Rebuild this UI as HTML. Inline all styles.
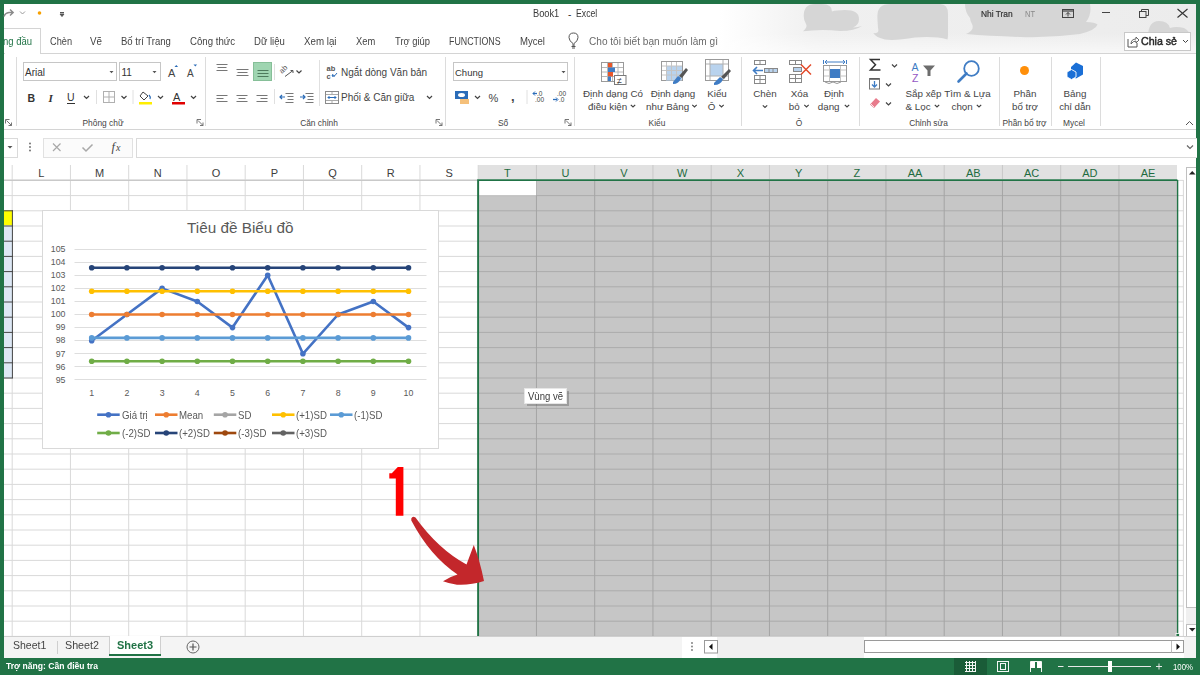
<!DOCTYPE html><html><head><meta charset="utf-8"><style>
*{margin:0;padding:0;box-sizing:border-box}
html,body{width:1200px;height:675px;overflow:hidden;background:#217346}
body{position:relative;font-family:"Liberation Sans",sans-serif}
.t{position:absolute;white-space:nowrap;line-height:1}
.b{position:absolute}
svg{position:absolute;overflow:visible}
</style></head><body>
<div class="b" style="left:4px;top:4px;width:1192px;height:654px;background:#fff"></div>
<svg style="left:0;top:0" width="1200" height="60" viewBox="0 0 1200 60">
<defs><linearGradient id="tg" x1="0" x2="1" y1="0" y2="0">
<stop offset="0" stop-color="#fff"/><stop offset="0.6" stop-color="#fff"/><stop offset="0.68" stop-color="#f0f0f0"/><stop offset="1" stop-color="#ececec"/></linearGradient>
<linearGradient id="tv" x1="0" x2="0" y1="0" y2="1">
<stop offset="0" stop-color="#fff" stop-opacity="0"/><stop offset="0.6" stop-color="#fff" stop-opacity="0"/><stop offset="1" stop-color="#fff" stop-opacity="0.6"/></linearGradient>
</defs>
<rect x="4" y="4" width="1192" height="49" fill="url(#tg)"/>
<rect x="4" y="4" width="1192" height="49" fill="url(#tv)"/>
<clipPath id="tc"><rect x="4" y="4" width="1192" height="49"/></clipPath>
<g fill="#d6d6d6" clip-path="url(#tc)">
<path d="M803.7,16 Q803.7,4 815,4 L822,4 Q832,4 832,11.5 Q836,10 845,10 Q859,10 859,19 Q859,25 853,27.5 Q858,27 862,26 Q855,31 840,31 Q825,29.5 812,30.5 Q806,31 803,31.3 Q808,27 806,24 Q803.7,20 803.7,16Z"/>
<path d="M890,4 H940 Q948,4 948,14 V34 Q948,37 947.5,39.4 Q935,36 915,37.5 Q895,41 885,39.5 Q876,37.5 873.3,33 Q880,34 878,28 Q877.4,20 877.4,16 Q877.4,4 890,4Z"/>
<path d="M965,4 H1090 Q1092,14 1086,22 Q1095,22 1097.5,24.5 Q1096,30 1080,34 Q1050,38 1020,37 Q990,36 966,34 Q975,30 972,24 Q970,20 970,18 Q965,12 965,4Z"/>
<path d="M1148,37 Q1148,21 1159,21 Q1168,21 1170,28 Q1176,26 1184,28 Q1190,31 1190,37Z"/>
</g>
</svg>
<svg style="left:0;top:0" width="80" height="28">
<path d="M4,16.5 Q5,13 9,12.5 H13 M10,9.5 L13.2,12.5 L10,15.5" stroke="#8a8a8a" stroke-width="1.4" fill="none"/>
<path d="M20,11.5 L22.5,14 L25,11.5" stroke="#9a9a9a" stroke-width="1" fill="none"/>
<circle cx="39.5" cy="13" r="1.8" fill="#f7a000"/>
<path d="M60,12.5 L64,12.5 M60,14 L64,14 L62,16.5Z" stroke="#555" stroke-width="1" fill="#555"/>
</svg>
<div class="t" style="left:533.3px;top:9.2px;font-size:10.2px;color:#3a3a3a;font-weight:400;transform:scaleX(0.909);transform-origin:0 0;">Book1</div>
<div class="t" style="left:568.0px;top:9.5px;font-size:10px;color:#333;font-weight:400;">-</div>
<div class="t" style="left:575.7px;top:9.2px;font-size:10.2px;color:#3a3a3a;font-weight:400;transform:scaleX(0.854);transform-origin:0 0;">Excel</div>
<div class="t" style="left:980.7px;top:10.0px;font-size:8.5px;color:#333;font-weight:400;transform:scaleX(0.984);transform-origin:0 0;-webkit-text-stroke:0.2px #333">Nhi Tran</div>
<div class="t" style="left:1025.0px;top:10.0px;font-size:8.5px;color:#888;font-weight:400;transform:scaleX(0.883);transform-origin:0 0;">NT</div>
<svg style="left:0;top:0" width="1200" height="28">
<rect x="1062.5" y="9.5" width="11" height="8" fill="none" stroke="#444" stroke-width="1"/>
<path d="M1063,11 L1073,11" stroke="#444" stroke-width="1.2"/>
<path d="M1068,16.5 L1068,12.5 M1066,14.5 L1068,12.5 L1070,14.5" stroke="#444" stroke-width="1" fill="none"/>
<path d="M1102,12.5 L1110,12.5" stroke="#444" stroke-width="1"/>
<rect x="1139.5" y="11.5" width="6.5" height="6" fill="none" stroke="#444" stroke-width="1"/>
<path d="M1141.5,11.5 L1141.5,9.5 L1148.5,9.5 L1148.5,15.5 L1146,15.5" stroke="#444" stroke-width="1" fill="none"/>
<path d="M1177.5,9 L1187.5,17.5 M1187.5,9 L1177.5,17.5" stroke="#333" stroke-width="1.1"/>
</svg>
<div class="b" style="left:4px;top:28px;width:37px;height:26px;background:#fff;border-top:1px solid #d4d4d4;border-right:1px solid #d4d4d4"></div>
<div class="b" style="left:4px;top:53px;width:1192px;height:1px;background:#d4d4d4"></div>
<div class="b" style="left:41px;top:53px;width:0px;height:0px;"></div>
<div class="t" style="left:3.0px;top:35.9px;font-size:11px;color:#217346;font-weight:400;transform:scaleX(0.862);transform-origin:0 0;">ng đầu</div>
<div class="t" style="left:50.0px;top:35.9px;font-size:11px;color:#444;font-weight:400;transform:scaleX(0.837);transform-origin:0 0;">Chèn</div>
<div class="t" style="left:90.0px;top:35.9px;font-size:11px;color:#444;font-weight:400;transform:scaleX(0.892);transform-origin:0 0;">Vẽ</div>
<div class="t" style="left:121.0px;top:35.9px;font-size:11px;color:#444;font-weight:400;transform:scaleX(0.867);transform-origin:0 0;">Bố trí Trang</div>
<div class="t" style="left:190.0px;top:35.9px;font-size:11px;color:#444;font-weight:400;transform:scaleX(0.876);transform-origin:0 0;">Công thức</div>
<div class="t" style="left:254.2px;top:35.9px;font-size:11px;color:#444;font-weight:400;transform:scaleX(0.868);transform-origin:0 0;">Dữ liệu</div>
<div class="t" style="left:304.2px;top:35.9px;font-size:11px;color:#444;font-weight:400;transform:scaleX(0.886);transform-origin:0 0;">Xem lại</div>
<div class="t" style="left:355.8px;top:35.9px;font-size:11px;color:#444;font-weight:400;transform:scaleX(0.849);transform-origin:0 0;">Xem</div>
<div class="t" style="left:395.0px;top:35.9px;font-size:11px;color:#444;font-weight:400;transform:scaleX(0.853);transform-origin:0 0;">Trợ giúp</div>
<div class="t" style="left:449.2px;top:35.9px;font-size:11px;color:#444;font-weight:400;transform:scaleX(0.804);transform-origin:0 0;">FUNCTIONS</div>
<div class="t" style="left:520.0px;top:35.9px;font-size:11px;color:#444;font-weight:400;transform:scaleX(0.870);transform-origin:0 0;">Mycel</div>
<div class="b" style="left:5px;top:53px;width:35px;height:1px;background:#fff"></div>
<svg style="left:0;top:0" width="600" height="60">
<path d="M573,46 L573,43.5 Q569,41 569,37.5 Q569,33 573.5,33 Q578,33 578,37.5 Q578,41 574,43.5 L574,46" stroke="#555" stroke-width="1" fill="none"/>
<path d="M571.5,46.5 L575.5,46.5 M572,48 L575,48" stroke="#555" stroke-width="1"/>
</svg>
<div class="t" style="left:589.0px;top:35.9px;font-size:11px;color:#6a6a6a;font-weight:400;transform:scaleX(0.917);transform-origin:0 0;">Cho tôi biết bạn muốn làm gì</div>
<div class="b" style="left:1123.5px;top:31.5px;width:67px;height:19px;border:1px solid #c8c8c8;background:#fff"></div>
<svg style="left:0;top:0" width="1200" height="60">
<path d="M1128,39 L1128,47 L1137,47 L1137,43" stroke="#555" stroke-width="1" fill="none"/>
<path d="M1131,44 Q1131,39 1136,39 L1136,37 L1139,40 L1136,43 L1136,41 Q1133,41 1131,44Z" stroke="#555" stroke-width="0.9" fill="none"/>
<path d="M1183,40 L1185.5,42.5 L1188,40" stroke="#444" stroke-width="1" fill="none"/>
</svg>
<div class="t" style="left:1140.7px;top:35.5px;font-size:10.6px;color:#2a2a2a;font-weight:400;transform:scaleX(1.002);transform-origin:0 0;-webkit-text-stroke:0.45px #2a2a2a">Chia sẻ</div>
<div class="b" style="left:4px;top:129px;width:1192px;height:1px;background:#d4d4d4"></div>
<div class="b" style="left:16px;top:57px;width:1px;height:69px;background:#dcdcdc"></div>
<div class="b" style="left:205px;top:57px;width:1px;height:69px;background:#dcdcdc"></div>
<div class="b" style="left:445px;top:57px;width:1px;height:69px;background:#dcdcdc"></div>
<div class="b" style="left:574px;top:57px;width:1px;height:69px;background:#dcdcdc"></div>
<div class="b" style="left:741px;top:57px;width:1px;height:69px;background:#dcdcdc"></div>
<div class="b" style="left:859px;top:57px;width:1px;height:69px;background:#dcdcdc"></div>
<div class="b" style="left:999px;top:57px;width:1px;height:69px;background:#dcdcdc"></div>
<div class="b" style="left:1050.5px;top:57px;width:1px;height:69px;background:#dcdcdc"></div>
<div class="b" style="left:1099.5px;top:57px;width:1px;height:69px;background:#dcdcdc"></div>
<div class="t" style="left:-197.0px;width:600px;text-align:center;top:119.1px;font-size:8.4px;color:#444;font-weight:400;">Phông chữ</div>
<div class="t" style="left:19.0px;width:600px;text-align:center;top:119.1px;font-size:8.4px;color:#444;font-weight:400;">Căn chỉnh</div>
<div class="t" style="left:203.0px;width:600px;text-align:center;top:119.1px;font-size:8.4px;color:#444;font-weight:400;">Số</div>
<div class="t" style="left:357.0px;width:600px;text-align:center;top:119.1px;font-size:8.4px;color:#444;font-weight:400;">Kiểu</div>
<div class="t" style="left:499.0px;width:600px;text-align:center;top:119.1px;font-size:8.4px;color:#444;font-weight:400;">Ô</div>
<div class="t" style="left:628.5px;width:600px;text-align:center;top:119.1px;font-size:8.4px;color:#444;font-weight:400;">Chỉnh sửa</div>
<div class="t" style="left:724.5px;width:600px;text-align:center;top:119.1px;font-size:8.4px;color:#444;font-weight:400;">Phần bổ trợ</div>
<div class="t" style="left:774.0px;width:600px;text-align:center;top:119.1px;font-size:8.4px;color:#444;font-weight:400;">Mycel</div>
<div class="b" style="left:23px;top:62px;width:94px;height:19px;border:1px solid #c6c6c6;background:#fff"></div>
<div class="b" style="left:119px;top:62px;width:41.5px;height:19px;border:1px solid #c6c6c6;background:#fff"></div>
<div class="b" style="left:453px;top:62px;width:115px;height:19px;border:1px solid #c6c6c6;background:#fff"></div>
<div class="t" style="left:25.0px;top:67.5px;font-size:10px;color:#333;font-weight:400;">Arial</div>
<div class="t" style="left:121.5px;top:67.5px;font-size:10px;color:#333;font-weight:400;">11</div>
<div class="t" style="left:455.0px;top:68.0px;font-size:9.5px;color:#333;font-weight:400;">Chung</div>
<div class="b" style="left:253px;top:62px;width:19px;height:19px;background:#9fd5b1;border:1px solid #86bf98"></div>

<svg style="left:0;top:0" width="1200" height="135">
<g fill="#555">
<path d="M109.5,71 l4,0 l-2,2.2z M152.5,71 l4,0 l-2,2.2z M561.5,71 l4,0 l-2,2.2z"/>
</g>
<text x="168" y="77" font-family="Liberation Sans" font-size="11" fill="#444">A</text>
<text x="187" y="77" font-family="Liberation Sans" font-size="10" fill="#444">A</text>
<path d="M174.5,67 l1.8,-2 l1.8,2z" fill="#2b6cb8"/>
<path d="M193.5,64.5 l1.8,2 l1.8,-2z" fill="#2b6cb8"/>
<text x="27.5" y="102" font-family="Liberation Sans" font-size="10.5" font-weight="700" fill="#333">B</text>
<text x="48.5" y="101.5" font-family="Liberation Serif" font-size="11" font-style="italic" font-weight="700" fill="#333">I</text>
<text x="67" y="101" font-family="Liberation Sans" font-size="10.5" fill="#333">U</text>
<path d="M67,103.5 h8" stroke="#333" stroke-width="1"/>
<g stroke="#555" stroke-width="1" fill="none">
<path d="M84,96 l2.5,2.5 l2.5,-2.5 M121.5,96 l2.5,2.5 l2.5,-2.5 M158,96 l2.5,2.5 l2.5,-2.5 M191,96 l2.5,2.5 l2.5,-2.5" stroke-width="1.2" stroke="#444"/>
<path d="M296.5,70.5 l2.5,2.5 l2.5,-2.5 M427,96 l2.5,2.5 l2.5,-2.5 M475,96 l2.5,2.5 l2.5,-2.5" stroke-width="1.2" stroke="#444"/>
</g>
<path d="M96.5,90 v14 M133,90 v14 M274.5,64 v16 M274.5,89 v15 M319.5,60 v46 M527,90 v14" stroke="#e0e0e0" stroke-width="1"/>
<g stroke="#b0b0b0" stroke-width="1" fill="none"><rect x="103.5" y="91.5" width="11" height="11"/><path d="M109,92 v10 M104,97 h10"/></g>
<path d="M143,92 l5,4 l-4,4 l-4,-4z" stroke="#444" stroke-width="1" fill="#fff"/>
<path d="M149,95 q2,2 1,4" stroke="#2b6cb8" stroke-width="1.2" fill="none"/>
<rect x="139" y="102" width="13" height="2.5" fill="#ffee00"/>
<text x="173" y="101" font-family="Liberation Sans" font-size="11" fill="#333">A</text>
<rect x="172" y="102" width="13" height="2.5" fill="#e00000"/>
<g stroke="#777" stroke-width="1">
<path d="M216.5,64.5 h11 M217.5,67.5 h9 M216.5,70.5 h11"/>
<path d="M236.5,69.5 h12 M237.5,72.5 h10 M236.5,75.5 h12"/>
<path d="M257.5,70.5 h11 M257.5,73.5 h11 M257.5,76.5 h11" stroke="#4d7a5c"/>
<path d="M216.5,95.5 h11 M216.5,98.5 h7 M216.5,101.5 h11"/>
<path d="M236.5,95.5 h11 M238.5,98.5 h7 M236.5,101.5 h11"/>
<path d="M256.5,95.5 h11 M260.5,98.5 h7 M256.5,101.5 h11"/>
<path d="M285.5,93.5 h8 M287.5,96.5 h6 M287.5,99.5 h6 M285.5,102.5 h8"/>
<path d="M305.5,93.5 h8 M307.5,96.5 h6 M307.5,99.5 h6 M305.5,102.5 h8"/>
</g>
<path d="M280,97 h5 M282,95 l-2,2 l2,2" stroke="#2b6cb8" stroke-width="1.2" fill="none"/>
<path d="M300,97 h5 M303,95 l2,2 l-2,2" stroke="#2b6cb8" stroke-width="1.2" fill="none"/>
<text x="0" y="0" font-family="Liberation Sans" font-size="7.5" fill="#555" transform="translate(282,74) rotate(-45)">ab</text>
<path d="M285,76.5 l8,-6 M290.5,70.5 h2.5 v2.5" stroke="#555" stroke-width="1" fill="none"/>
<text x="326.5" y="71" font-family="Liberation Sans" font-size="7.5" font-weight="700" fill="#555">ab</text>
<text x="326.5" y="78.5" font-family="Liberation Sans" font-size="7.5" font-weight="700" fill="#555">c</text>
<path d="M332,76 q3,1 5,-3 M335,76 l-3,0 l1,-2" stroke="#2b6cb8" stroke-width="1" fill="none"/>
<rect x="325.5" y="91.5" width="13" height="12" stroke="#8a8a8a" fill="#fff" stroke-width="1"/>
<path d="M326,94.5 h12 M326,100.5 h12 M332,92 v2 M332,101 v2" stroke="#aaa"/>
<path d="M328,97.5 h8 M329.5,96 l-1.5,1.5 l1.5,1.5 M334.5,96 l1.5,1.5 l-1.5,1.5" stroke="#2b6cb8" stroke-width="1" fill="none"/>
<rect x="455" y="91" width="13" height="8" fill="#2b6cb8"/>
<ellipse cx="461.5" cy="95" rx="3.5" ry="2" fill="#fff"/>
<rect x="460" y="99" width="9" height="5" fill="#f5c07a"/>
<text x="488.5" y="102" font-family="Liberation Sans" font-size="11" fill="#444">%</text>
<text x="511" y="101" font-family="Liberation Sans" font-size="13" font-weight="700" fill="#444">,</text>
<text x="537" y="96" font-family="Liberation Sans" font-size="6.5" fill="#444">.0</text>
<text x="535" y="102" font-family="Liberation Sans" font-size="6.5" fill="#444">.00</text>
<path d="M533,93.5 h4" stroke="#2b6cb8" stroke-width="1.3"/><path d="M535,91.5 l-2,2 l2,2" stroke="#2b6cb8" fill="none"/>
<text x="557" y="96" font-family="Liberation Sans" font-size="6.5" fill="#444">.00</text>
<text x="559" y="102" font-family="Liberation Sans" font-size="6.5" fill="#444">.0</text>
<path d="M553,99.5 h4" stroke="#2b6cb8" stroke-width="1.3"/><path d="M556,97.5 l2,2 l-2,2" stroke="#2b6cb8" fill="none"/>
<!-- dialog launchers -->
<g stroke="#666" stroke-width="0.9" fill="none">
<path d="M9.5,119.5 h-4 v4 M6.5,120.5 l5,5 M11.5,122.5 v3 h-3"/>
<path d="M201.0,119.5 h-4 v4 M198.0,120.5 l5,5 M203.0,122.5 v3 h-3"/>
<path d="M440.0,119.5 h-4 v4 M437.0,120.5 l5,5 M442.0,122.5 v3 h-3"/>
<path d="M569.0,119.5 h-4 v4 M566.0,120.5 l5,5 M571.0,122.5 v3 h-3"/>
</g>
<path d="M1186,125 l3.5,-3.5 l3.5,3.5" stroke="#555" stroke-width="1" fill="none"/>
</svg>
<div class="t" style="left:341.0px;top:67.5px;font-size:10px;color:#444;font-weight:400;">Ngắt dòng Văn bản</div>
<div class="t" style="left:341.0px;top:92.5px;font-size:10px;color:#444;font-weight:400;">Phối &amp; Căn giữa</div>
<div class="t" style="left:313.0px;width:600px;text-align:center;top:88.7px;font-size:9.8px;color:#444;font-weight:400;">Định dạng Có</div>
<div class="t" style="left:313.0px;width:600px;text-align:center;top:102.0px;font-size:9.8px;color:#444;font-weight:400;">điều kiện <span style="display:inline-block;width:8px"></span></div>
<div class="t" style="left:373.0px;width:600px;text-align:center;top:88.7px;font-size:9.8px;color:#444;font-weight:400;">Định dạng</div>
<div class="t" style="left:373.0px;width:600px;text-align:center;top:102.0px;font-size:9.8px;color:#444;font-weight:400;">như Bảng <span style="display:inline-block;width:8px"></span></div>
<div class="t" style="left:417.0px;width:600px;text-align:center;top:88.7px;font-size:9.8px;color:#444;font-weight:400;">Kiểu</div>
<div class="t" style="left:417.0px;width:600px;text-align:center;top:102.0px;font-size:9.8px;color:#444;font-weight:400;">Ô <span style="display:inline-block;width:8px"></span></div>
<div class="t" style="left:465.0px;width:600px;text-align:center;top:88.7px;font-size:9.8px;color:#444;font-weight:400;">Chèn</div>
<div class="t" style="left:465.0px;width:600px;text-align:center;top:102.0px;font-size:9.8px;color:#444;font-weight:400;"><span style="display:inline-block;width:8px"></span></div>
<div class="t" style="left:499.5px;width:600px;text-align:center;top:88.7px;font-size:9.8px;color:#444;font-weight:400;">Xóa</div>
<div class="t" style="left:499.5px;width:600px;text-align:center;top:102.0px;font-size:9.8px;color:#444;font-weight:400;">bỏ <span style="display:inline-block;width:8px"></span></div>
<div class="t" style="left:534.0px;width:600px;text-align:center;top:88.7px;font-size:9.8px;color:#444;font-weight:400;">Định</div>
<div class="t" style="left:534.0px;width:600px;text-align:center;top:102.0px;font-size:9.8px;color:#444;font-weight:400;">dạng <span style="display:inline-block;width:8px"></span></div>
<div class="t" style="left:623.5px;width:600px;text-align:center;top:88.7px;font-size:9.8px;color:#444;font-weight:400;">Sắp xếp</div>
<div class="t" style="left:623.5px;width:600px;text-align:center;top:102.0px;font-size:9.8px;color:#444;font-weight:400;">&amp; Lọc <span style="display:inline-block;width:8px"></span></div>
<div class="t" style="left:667.5px;width:600px;text-align:center;top:88.7px;font-size:9.8px;color:#444;font-weight:400;">Tìm &amp; Lựa</div>
<div class="t" style="left:667.5px;width:600px;text-align:center;top:102.0px;font-size:9.8px;color:#444;font-weight:400;">chọn <span style="display:inline-block;width:8px"></span></div>
<div class="t" style="left:725.0px;width:600px;text-align:center;top:88.7px;font-size:9.8px;color:#444;font-weight:400;">Phần</div>
<div class="t" style="left:725.0px;width:600px;text-align:center;top:102.0px;font-size:9.8px;color:#444;font-weight:400;">bổ trợ</div>
<div class="t" style="left:775.0px;width:600px;text-align:center;top:88.7px;font-size:9.8px;color:#444;font-weight:400;">Bảng</div>
<div class="t" style="left:775.0px;width:600px;text-align:center;top:102.0px;font-size:9.8px;color:#444;font-weight:400;">chỉ dẫn</div>
<div class="b" style="left:4px;top:137.5px;width:14px;height:20px;border:1px solid #dadada;border-left:none;background:#fff"></div>
<div class="b" style="left:42.5px;top:137.5px;width:90.5px;height:20px;border:1px solid #e1e1e1;background:#fbfbfb"></div>
<div class="b" style="left:135.5px;top:137.5px;width:1061px;height:20px;border-top:1px solid #dadada;border-bottom:1px solid #dadada;border-left:1px solid #dadada;background:#fff"></div>
<svg style="left:0;top:0" width="1200" height="165">
<path d="M7.5,146 h5 l-2.5,2.5z" fill="#555"/>
<circle cx="30" cy="143.5" r="0.9" fill="#666"/><circle cx="30" cy="147" r="0.9" fill="#666"/><circle cx="30" cy="150.5" r="0.9" fill="#666"/>
<path d="M53,143.5 l7.5,7.5 M60.5,143.5 l-7.5,7.5" stroke="#a8a8a8" stroke-width="1.2"/>
<path d="M82.5,147.5 l3.5,3.5 l6.5,-6.5" stroke="#a8a8a8" stroke-width="1.5" fill="none"/>
<path d="M1187,145.5 l3,3 l3,-3" stroke="#666" stroke-width="1.2" fill="none"/>
</svg>
<div class="t" style="left:111.5px;top:140.9px;font-size:12.5px;color:#444;font-weight:400;font-family:Liberation Serif;font-style:italic">f</div>
<div class="t" style="left:116.0px;top:143.0px;font-size:10px;color:#444;font-weight:400;font-family:Liberation Serif;font-style:italic">x</div>
<div class="b" style="left:478.2px;top:165.2px;width:699.2px;height:13.6px;background:#e1e1e1"></div>
<svg style="left:0;top:0" width="1200" height="675">
<path d="M4,180.40 H478" stroke="#d9d9d9" stroke-width="1"/>
<path d="M1177,180.40 H1183.5" stroke="#d9d9d9" stroke-width="1"/>
<path d="M4,195.60 H478" stroke="#d9d9d9" stroke-width="1"/>
<path d="M1177,195.60 H1183.5" stroke="#d9d9d9" stroke-width="1"/>
<path d="M4,210.80 H478" stroke="#d9d9d9" stroke-width="1"/>
<path d="M1177,210.80 H1183.5" stroke="#d9d9d9" stroke-width="1"/>
<path d="M4,226.00 H478" stroke="#d9d9d9" stroke-width="1"/>
<path d="M1177,226.00 H1183.5" stroke="#d9d9d9" stroke-width="1"/>
<path d="M4,241.20 H478" stroke="#d9d9d9" stroke-width="1"/>
<path d="M1177,241.20 H1183.5" stroke="#d9d9d9" stroke-width="1"/>
<path d="M4,256.40 H478" stroke="#d9d9d9" stroke-width="1"/>
<path d="M1177,256.40 H1183.5" stroke="#d9d9d9" stroke-width="1"/>
<path d="M4,271.60 H478" stroke="#d9d9d9" stroke-width="1"/>
<path d="M1177,271.60 H1183.5" stroke="#d9d9d9" stroke-width="1"/>
<path d="M4,286.80 H478" stroke="#d9d9d9" stroke-width="1"/>
<path d="M1177,286.80 H1183.5" stroke="#d9d9d9" stroke-width="1"/>
<path d="M4,302.00 H478" stroke="#d9d9d9" stroke-width="1"/>
<path d="M1177,302.00 H1183.5" stroke="#d9d9d9" stroke-width="1"/>
<path d="M4,317.20 H478" stroke="#d9d9d9" stroke-width="1"/>
<path d="M1177,317.20 H1183.5" stroke="#d9d9d9" stroke-width="1"/>
<path d="M4,332.40 H478" stroke="#d9d9d9" stroke-width="1"/>
<path d="M1177,332.40 H1183.5" stroke="#d9d9d9" stroke-width="1"/>
<path d="M4,347.60 H478" stroke="#d9d9d9" stroke-width="1"/>
<path d="M1177,347.60 H1183.5" stroke="#d9d9d9" stroke-width="1"/>
<path d="M4,362.80 H478" stroke="#d9d9d9" stroke-width="1"/>
<path d="M1177,362.80 H1183.5" stroke="#d9d9d9" stroke-width="1"/>
<path d="M4,378.00 H478" stroke="#d9d9d9" stroke-width="1"/>
<path d="M1177,378.00 H1183.5" stroke="#d9d9d9" stroke-width="1"/>
<path d="M4,393.20 H478" stroke="#d9d9d9" stroke-width="1"/>
<path d="M1177,393.20 H1183.5" stroke="#d9d9d9" stroke-width="1"/>
<path d="M4,408.40 H478" stroke="#d9d9d9" stroke-width="1"/>
<path d="M1177,408.40 H1183.5" stroke="#d9d9d9" stroke-width="1"/>
<path d="M4,423.60 H478" stroke="#d9d9d9" stroke-width="1"/>
<path d="M1177,423.60 H1183.5" stroke="#d9d9d9" stroke-width="1"/>
<path d="M4,438.80 H478" stroke="#d9d9d9" stroke-width="1"/>
<path d="M1177,438.80 H1183.5" stroke="#d9d9d9" stroke-width="1"/>
<path d="M4,454.00 H478" stroke="#d9d9d9" stroke-width="1"/>
<path d="M1177,454.00 H1183.5" stroke="#d9d9d9" stroke-width="1"/>
<path d="M4,469.20 H478" stroke="#d9d9d9" stroke-width="1"/>
<path d="M1177,469.20 H1183.5" stroke="#d9d9d9" stroke-width="1"/>
<path d="M4,484.40 H478" stroke="#d9d9d9" stroke-width="1"/>
<path d="M1177,484.40 H1183.5" stroke="#d9d9d9" stroke-width="1"/>
<path d="M4,499.60 H478" stroke="#d9d9d9" stroke-width="1"/>
<path d="M1177,499.60 H1183.5" stroke="#d9d9d9" stroke-width="1"/>
<path d="M4,514.80 H478" stroke="#d9d9d9" stroke-width="1"/>
<path d="M1177,514.80 H1183.5" stroke="#d9d9d9" stroke-width="1"/>
<path d="M4,530.00 H478" stroke="#d9d9d9" stroke-width="1"/>
<path d="M1177,530.00 H1183.5" stroke="#d9d9d9" stroke-width="1"/>
<path d="M4,545.20 H478" stroke="#d9d9d9" stroke-width="1"/>
<path d="M1177,545.20 H1183.5" stroke="#d9d9d9" stroke-width="1"/>
<path d="M4,560.40 H478" stroke="#d9d9d9" stroke-width="1"/>
<path d="M1177,560.40 H1183.5" stroke="#d9d9d9" stroke-width="1"/>
<path d="M4,575.60 H478" stroke="#d9d9d9" stroke-width="1"/>
<path d="M1177,575.60 H1183.5" stroke="#d9d9d9" stroke-width="1"/>
<path d="M4,590.80 H478" stroke="#d9d9d9" stroke-width="1"/>
<path d="M1177,590.80 H1183.5" stroke="#d9d9d9" stroke-width="1"/>
<path d="M4,606.00 H478" stroke="#d9d9d9" stroke-width="1"/>
<path d="M1177,606.00 H1183.5" stroke="#d9d9d9" stroke-width="1"/>
<path d="M4,621.20 H478" stroke="#d9d9d9" stroke-width="1"/>
<path d="M1177,621.20 H1183.5" stroke="#d9d9d9" stroke-width="1"/>
<path d="M4,636.40 H478" stroke="#d9d9d9" stroke-width="1"/>
<path d="M1177,636.40 H1183.5" stroke="#d9d9d9" stroke-width="1"/>
<path d="M12.20,165 V179.5" stroke="#d9d9d9" stroke-width="1"/>
<path d="M12.20,180 V636" stroke="#d9d9d9" stroke-width="1"/>
<path d="M70.45,165 V179.5" stroke="#d9d9d9" stroke-width="1"/>
<path d="M70.45,180 V636" stroke="#d9d9d9" stroke-width="1"/>
<path d="M128.70,165 V179.5" stroke="#d9d9d9" stroke-width="1"/>
<path d="M128.70,180 V636" stroke="#d9d9d9" stroke-width="1"/>
<path d="M186.95,165 V179.5" stroke="#d9d9d9" stroke-width="1"/>
<path d="M186.95,180 V636" stroke="#d9d9d9" stroke-width="1"/>
<path d="M245.20,165 V179.5" stroke="#d9d9d9" stroke-width="1"/>
<path d="M245.20,180 V636" stroke="#d9d9d9" stroke-width="1"/>
<path d="M303.45,165 V179.5" stroke="#d9d9d9" stroke-width="1"/>
<path d="M303.45,180 V636" stroke="#d9d9d9" stroke-width="1"/>
<path d="M361.70,165 V179.5" stroke="#d9d9d9" stroke-width="1"/>
<path d="M361.70,180 V636" stroke="#d9d9d9" stroke-width="1"/>
<path d="M419.95,165 V179.5" stroke="#d9d9d9" stroke-width="1"/>
<path d="M419.95,180 V636" stroke="#d9d9d9" stroke-width="1"/>
<path d="M478.20,165 V179.5" stroke="#d9d9d9" stroke-width="1"/>
<path d="M478.20,180 V636" stroke="#d9d9d9" stroke-width="1"/>
<path d="M1183.4,180 V636" stroke="#d9d9d9" stroke-width="1"/>
<path d="M4,180.1 H478" stroke="#bdbdbd" stroke-width="1"/>
<rect x="478" y="180" width="699.4" height="456" fill="#c6c6c6"/>
<path d="M479,195.60 H1177" stroke="#acacac" stroke-width="1"/>
<path d="M479,210.80 H1177" stroke="#acacac" stroke-width="1"/>
<path d="M479,226.00 H1177" stroke="#acacac" stroke-width="1"/>
<path d="M479,241.20 H1177" stroke="#acacac" stroke-width="1"/>
<path d="M479,256.40 H1177" stroke="#acacac" stroke-width="1"/>
<path d="M479,271.60 H1177" stroke="#acacac" stroke-width="1"/>
<path d="M479,286.80 H1177" stroke="#acacac" stroke-width="1"/>
<path d="M479,302.00 H1177" stroke="#acacac" stroke-width="1"/>
<path d="M479,317.20 H1177" stroke="#acacac" stroke-width="1"/>
<path d="M479,332.40 H1177" stroke="#acacac" stroke-width="1"/>
<path d="M479,347.60 H1177" stroke="#acacac" stroke-width="1"/>
<path d="M479,362.80 H1177" stroke="#acacac" stroke-width="1"/>
<path d="M479,378.00 H1177" stroke="#acacac" stroke-width="1"/>
<path d="M479,393.20 H1177" stroke="#acacac" stroke-width="1"/>
<path d="M479,408.40 H1177" stroke="#acacac" stroke-width="1"/>
<path d="M479,423.60 H1177" stroke="#acacac" stroke-width="1"/>
<path d="M479,438.80 H1177" stroke="#acacac" stroke-width="1"/>
<path d="M479,454.00 H1177" stroke="#acacac" stroke-width="1"/>
<path d="M479,469.20 H1177" stroke="#acacac" stroke-width="1"/>
<path d="M479,484.40 H1177" stroke="#acacac" stroke-width="1"/>
<path d="M479,499.60 H1177" stroke="#acacac" stroke-width="1"/>
<path d="M479,514.80 H1177" stroke="#acacac" stroke-width="1"/>
<path d="M479,530.00 H1177" stroke="#acacac" stroke-width="1"/>
<path d="M479,545.20 H1177" stroke="#acacac" stroke-width="1"/>
<path d="M479,560.40 H1177" stroke="#acacac" stroke-width="1"/>
<path d="M479,575.60 H1177" stroke="#acacac" stroke-width="1"/>
<path d="M479,590.80 H1177" stroke="#acacac" stroke-width="1"/>
<path d="M479,606.00 H1177" stroke="#acacac" stroke-width="1"/>
<path d="M479,621.20 H1177" stroke="#acacac" stroke-width="1"/>
<path d="M479,636.40 H1177" stroke="#acacac" stroke-width="1"/>
<path d="M536.45,181 V636" stroke="#a4a4a4" stroke-width="1"/>
<path d="M536.45,165 V179" stroke="#c8c8c8" stroke-width="1"/>
<path d="M594.70,181 V636" stroke="#a4a4a4" stroke-width="1"/>
<path d="M594.70,165 V179" stroke="#c8c8c8" stroke-width="1"/>
<path d="M652.95,181 V636" stroke="#a4a4a4" stroke-width="1"/>
<path d="M652.95,165 V179" stroke="#c8c8c8" stroke-width="1"/>
<path d="M711.20,181 V636" stroke="#a4a4a4" stroke-width="1"/>
<path d="M711.20,165 V179" stroke="#c8c8c8" stroke-width="1"/>
<path d="M769.45,181 V636" stroke="#a4a4a4" stroke-width="1"/>
<path d="M769.45,165 V179" stroke="#c8c8c8" stroke-width="1"/>
<path d="M827.70,181 V636" stroke="#a4a4a4" stroke-width="1"/>
<path d="M827.70,165 V179" stroke="#c8c8c8" stroke-width="1"/>
<path d="M885.95,181 V636" stroke="#a4a4a4" stroke-width="1"/>
<path d="M885.95,165 V179" stroke="#c8c8c8" stroke-width="1"/>
<path d="M944.20,181 V636" stroke="#a4a4a4" stroke-width="1"/>
<path d="M944.20,165 V179" stroke="#c8c8c8" stroke-width="1"/>
<path d="M1002.45,181 V636" stroke="#a4a4a4" stroke-width="1"/>
<path d="M1002.45,165 V179" stroke="#c8c8c8" stroke-width="1"/>
<path d="M1060.70,181 V636" stroke="#a4a4a4" stroke-width="1"/>
<path d="M1060.70,165 V179" stroke="#c8c8c8" stroke-width="1"/>
<path d="M1118.95,181 V636" stroke="#a4a4a4" stroke-width="1"/>
<path d="M1118.95,165 V179" stroke="#c8c8c8" stroke-width="1"/>
<rect x="479.2" y="181" width="57" height="14.3" fill="#fff"/>
<path d="M478.1,636 V180.1 H1177.4" stroke="#217346" stroke-width="1.9" fill="none"/>
<path d="M1177.6,180 V636" stroke="#217346" stroke-width="1.4" fill="none"/>
</svg>
<div class="t" style="left:-258.7px;width:600px;text-align:center;top:168.3px;font-size:11px;color:#3c3c3c;font-weight:400;">L</div>
<div class="t" style="left:-200.4px;width:600px;text-align:center;top:168.3px;font-size:11px;color:#3c3c3c;font-weight:400;">M</div>
<div class="t" style="left:-142.2px;width:600px;text-align:center;top:168.3px;font-size:11px;color:#3c3c3c;font-weight:400;">N</div>
<div class="t" style="left:-83.9px;width:600px;text-align:center;top:168.3px;font-size:11px;color:#3c3c3c;font-weight:400;">O</div>
<div class="t" style="left:-25.7px;width:600px;text-align:center;top:168.3px;font-size:11px;color:#3c3c3c;font-weight:400;">P</div>
<div class="t" style="left:32.6px;width:600px;text-align:center;top:168.3px;font-size:11px;color:#3c3c3c;font-weight:400;">Q</div>
<div class="t" style="left:90.8px;width:600px;text-align:center;top:168.3px;font-size:11px;color:#3c3c3c;font-weight:400;">R</div>
<div class="t" style="left:149.1px;width:600px;text-align:center;top:168.3px;font-size:11px;color:#3c3c3c;font-weight:400;">S</div>
<div class="t" style="left:207.3px;width:600px;text-align:center;top:168.3px;font-size:11px;color:#1e6b40;font-weight:400;">T</div>
<div class="t" style="left:265.6px;width:600px;text-align:center;top:168.3px;font-size:11px;color:#1e6b40;font-weight:400;">U</div>
<div class="t" style="left:323.8px;width:600px;text-align:center;top:168.3px;font-size:11px;color:#1e6b40;font-weight:400;">V</div>
<div class="t" style="left:382.1px;width:600px;text-align:center;top:168.3px;font-size:11px;color:#1e6b40;font-weight:400;">W</div>
<div class="t" style="left:440.3px;width:600px;text-align:center;top:168.3px;font-size:11px;color:#1e6b40;font-weight:400;">X</div>
<div class="t" style="left:498.6px;width:600px;text-align:center;top:168.3px;font-size:11px;color:#1e6b40;font-weight:400;">Y</div>
<div class="t" style="left:556.8px;width:600px;text-align:center;top:168.3px;font-size:11px;color:#1e6b40;font-weight:400;">Z</div>
<div class="t" style="left:615.1px;width:600px;text-align:center;top:168.3px;font-size:11px;color:#1e6b40;font-weight:400;">AA</div>
<div class="t" style="left:673.3px;width:600px;text-align:center;top:168.3px;font-size:11px;color:#1e6b40;font-weight:400;">AB</div>
<div class="t" style="left:731.6px;width:600px;text-align:center;top:168.3px;font-size:11px;color:#1e6b40;font-weight:400;">AC</div>
<div class="t" style="left:789.8px;width:600px;text-align:center;top:168.3px;font-size:11px;color:#1e6b40;font-weight:400;">AD</div>
<div class="t" style="left:848.1px;width:600px;text-align:center;top:168.3px;font-size:11px;color:#1e6b40;font-weight:400;">AE</div>
<svg style="left:0;top:0" width="20" height="400">
<rect x="4" y="210.3" width="8.5" height="15.2" fill="#ffff00"/>
<rect x="4" y="225.5" width="8.5" height="152.5" fill="#dde8f5"/>
<path d="M4,210.80 H13" stroke="#444" stroke-width="1"/>
<path d="M4,226.00 H13" stroke="#444" stroke-width="1"/>
<path d="M4,241.20 H13" stroke="#444" stroke-width="1"/>
<path d="M4,256.40 H13" stroke="#444" stroke-width="1"/>
<path d="M4,271.60 H13" stroke="#444" stroke-width="1"/>
<path d="M4,286.80 H13" stroke="#444" stroke-width="1"/>
<path d="M4,302.00 H13" stroke="#444" stroke-width="1"/>
<path d="M4,317.20 H13" stroke="#444" stroke-width="1"/>
<path d="M4,332.40 H13" stroke="#444" stroke-width="1"/>
<path d="M4,347.60 H13" stroke="#444" stroke-width="1"/>
<path d="M4,362.80 H13" stroke="#444" stroke-width="1"/>
<path d="M4,378.00 H13" stroke="#444" stroke-width="1"/>
<path d="M12.4,210.3 V378.1" stroke="#444" stroke-width="1"/>
</svg>
<div class="b" style="left:1186px;top:167px;width:10px;height:12.5px;border:1px solid #c0c0c0;border-right:none;background:#fff"></div>
<div class="b" style="left:1186px;top:179px;width:10px;height:429px;border-left:1px solid #c0c0c0;border-bottom:1px solid #c0c0c0;background:#fff"></div>
<div class="b" style="left:1186px;top:608px;width:10px;height:16px;background:#f0f0f0"></div>
<div class="b" style="left:1186px;top:624px;width:10px;height:12.5px;border:1px solid #c0c0c0;border-right:none;background:#fff"></div>
<svg style="left:0;top:0" width="1200" height="675">
<path d="M1189,174.5 h6.5 l-3.25,-3.5z" fill="#222"/>
<path d="M1189,628 h6.5 l-3.25,3.5z" fill="#222"/>
<rect x="1176" y="633.5" width="3.5" height="3" fill="#217346" stroke="#fff" stroke-width="0.8"/>
</svg>
<div class="b" style="left:4px;top:636px;width:1192px;height:22px;background:#f4f4f4;border-top:1px solid #cfcfcf"></div>
<div class="b" style="left:682px;top:637px;width:514px;height:21px;background:#fff"></div>
<div class="b" style="left:717px;top:637px;width:147px;height:21px;background:#f0f0f0"></div>
<div class="b" style="left:108.8px;top:636px;width:52.4px;height:19px;background:#fff;border-left:1px solid #cfcfcf;border-right:1px solid #cfcfcf"></div>
<div class="b" style="left:108.8px;top:654px;width:52.4px;height:1.5px;background:#217346"></div>
<div class="b" style="left:57px;top:641px;width:1px;height:13px;background:#cfcfcf"></div>
<div class="t" style="left:12.7px;top:640.3px;font-size:11.5px;color:#444;font-weight:400;transform:scaleX(0.914);transform-origin:0 0;">Sheet1</div>
<div class="t" style="left:65.0px;top:640.3px;font-size:11.5px;color:#444;font-weight:400;transform:scaleX(0.933);transform-origin:0 0;">Sheet2</div>
<div class="t" style="left:117.0px;top:640.3px;font-size:11.5px;color:#217346;font-weight:700;transform:scaleX(0.955);transform-origin:0 0;">Sheet3</div>
<svg style="left:0;top:0" width="1200" height="675">
<circle cx="193" cy="647" r="6" stroke="#666" stroke-width="1" fill="none"/>
<path d="M193,643.5 v7 M189.5,647 h7" stroke="#555" stroke-width="1.2"/>
<circle cx="692" cy="643" r="0.9" fill="#777"/><circle cx="692" cy="646.5" r="0.9" fill="#777"/><circle cx="692" cy="650" r="0.9" fill="#777"/>
<rect x="704.5" y="640.5" width="13" height="12.5" fill="#fff" stroke="#9a9a9a"/>
<path d="M709,646.75 l3.5,-3.25 v6.5z" fill="#111"/>
<rect x="864.5" y="640.5" width="319" height="12" fill="#fff" stroke="#9a9a9a"/>
<path d="M1171.5,641 v11.5" stroke="#bdbdbd"/>
<path d="M1180,646.75 l-3.5,-3.25 v6.5z" fill="#111"/>
</svg>
<div class="b" style="left:1184px;top:637px;width:12px;height:21px;background:#f4f4f4"></div>
<div class="t" style="left:6.0px;top:662.4px;font-size:9.2px;color:#fff;font-weight:700;transform:scaleX(0.934);transform-origin:0 0;">Trợ năng: Cần điều tra</div>
<div class="b" style="left:954px;top:658px;width:33px;height:17px;background:#1a5c38"></div>
<svg style="left:0;top:0" width="1200" height="675">
<g stroke="#fff" stroke-width="1" fill="none" opacity="0.95">
<path d="M965,662.5 h11 M965,665.5 h11 M965,668.5 h11 M965,671.5 h11 M966.5,661 v11 M969.5,661 v11 M972.5,661 v11 M975.5,661 v11"/>
<rect x="997.5" y="661.5" width="11" height="10"/><rect x="1000.5" y="663.5" width="5" height="6"/>
<path d="M1030.5,672 v-10.5 h11 v10.5"/>
</g>
<rect x="1031" y="662" width="4" height="6" fill="#fff"/><rect x="1037" y="662" width="4" height="6" fill="#fff"/>
<path d="M1058,666.5 h5.5 M1068,666.5 h83 M1156,666.5 h6 M1159,663.5 v6" stroke="#e8e8e8" stroke-width="1"/>
<rect x="1108" y="661" width="4" height="11" fill="#fff"/>
</svg>
<div class="t" style="left:1173.0px;top:662.0px;font-size:9.5px;color:#fff;font-weight:400;transform:scaleX(0.823);transform-origin:0 0;">100%</div>
<div class="b" style="left:42px;top:210px;width:396.5px;height:238.5px;background:#fff;border:1px solid #d9d9d9"></div>
<div class="t" style="left:-59.7px;width:600px;text-align:center;top:220.0px;font-size:15.3px;color:#595959;font-weight:400;">Tiêu đề Biểu đồ</div>
<svg style="left:0;top:0" width="1200" height="675">
<path d="M74.5,379.5 H426.5" stroke="#dedede" stroke-width="1"/>
<path d="M74.5,366.5 H426.5" stroke="#dedede" stroke-width="1"/>
<path d="M74.5,353.5 H426.5" stroke="#dedede" stroke-width="1"/>
<path d="M74.5,340.5 H426.5" stroke="#dedede" stroke-width="1"/>
<path d="M74.5,327.5 H426.5" stroke="#dedede" stroke-width="1"/>
<path d="M74.5,314.5 H426.5" stroke="#dedede" stroke-width="1"/>
<path d="M74.5,301.5 H426.5" stroke="#dedede" stroke-width="1"/>
<path d="M74.5,288.5 H426.5" stroke="#dedede" stroke-width="1"/>
<path d="M74.5,275.5 H426.5" stroke="#dedede" stroke-width="1"/>
<path d="M74.5,262.5 H426.5" stroke="#dedede" stroke-width="1"/>
<path d="M74.5,249.5 H426.5" stroke="#dedede" stroke-width="1"/>
</svg>
<div class="t" style="left:-534.5px;width:600px;text-align:right;top:375.7px;font-size:8.8px;color:#595959;font-weight:400;">95</div>
<div class="t" style="left:-534.5px;width:600px;text-align:right;top:362.6px;font-size:8.8px;color:#595959;font-weight:400;">96</div>
<div class="t" style="left:-534.5px;width:600px;text-align:right;top:349.5px;font-size:8.8px;color:#595959;font-weight:400;">97</div>
<div class="t" style="left:-534.5px;width:600px;text-align:right;top:336.4px;font-size:8.8px;color:#595959;font-weight:400;">98</div>
<div class="t" style="left:-534.5px;width:600px;text-align:right;top:323.4px;font-size:8.8px;color:#595959;font-weight:400;">99</div>
<div class="t" style="left:-534.5px;width:600px;text-align:right;top:310.3px;font-size:8.8px;color:#595959;font-weight:400;">100</div>
<div class="t" style="left:-534.5px;width:600px;text-align:right;top:297.2px;font-size:8.8px;color:#595959;font-weight:400;">101</div>
<div class="t" style="left:-534.5px;width:600px;text-align:right;top:284.2px;font-size:8.8px;color:#595959;font-weight:400;">102</div>
<div class="t" style="left:-534.5px;width:600px;text-align:right;top:271.1px;font-size:8.8px;color:#595959;font-weight:400;">103</div>
<div class="t" style="left:-534.5px;width:600px;text-align:right;top:258.0px;font-size:8.8px;color:#595959;font-weight:400;">104</div>
<div class="t" style="left:-534.5px;width:600px;text-align:right;top:245.0px;font-size:8.8px;color:#595959;font-weight:400;">105</div>
<div class="t" style="left:-208.3px;width:600px;text-align:center;top:388.9px;font-size:8.8px;color:#595959;font-weight:400;">1</div>
<div class="t" style="left:-173.1px;width:600px;text-align:center;top:388.9px;font-size:8.8px;color:#595959;font-weight:400;">2</div>
<div class="t" style="left:-137.9px;width:600px;text-align:center;top:388.9px;font-size:8.8px;color:#595959;font-weight:400;">3</div>
<div class="t" style="left:-102.7px;width:600px;text-align:center;top:388.9px;font-size:8.8px;color:#595959;font-weight:400;">4</div>
<div class="t" style="left:-67.5px;width:600px;text-align:center;top:388.9px;font-size:8.8px;color:#595959;font-weight:400;">5</div>
<div class="t" style="left:-32.3px;width:600px;text-align:center;top:388.9px;font-size:8.8px;color:#595959;font-weight:400;">6</div>
<div class="t" style="left:2.9px;width:600px;text-align:center;top:388.9px;font-size:8.8px;color:#595959;font-weight:400;">7</div>
<div class="t" style="left:38.1px;width:600px;text-align:center;top:388.9px;font-size:8.8px;color:#595959;font-weight:400;">8</div>
<div class="t" style="left:73.3px;width:600px;text-align:center;top:388.9px;font-size:8.8px;color:#595959;font-weight:400;">9</div>
<div class="t" style="left:108.5px;width:600px;text-align:center;top:388.9px;font-size:8.8px;color:#595959;font-weight:400;">10</div>
<svg style="left:0;top:0" width="1200" height="675">
<polyline points="91.7,340.7 126.9,314.5 162.1,288.4 197.3,301.5 232.5,327.6 267.7,275.3 302.9,353.8 338.1,314.5 373.3,301.5 408.5,327.6" stroke="#4472c4" stroke-width="2.6" fill="none" stroke-linejoin="round" stroke-linecap="round"/>
<circle cx="91.7" cy="340.7" r="2.8" fill="#4472c4"/>
<circle cx="126.9" cy="314.5" r="2.8" fill="#4472c4"/>
<circle cx="162.1" cy="288.4" r="2.8" fill="#4472c4"/>
<circle cx="197.3" cy="301.5" r="2.8" fill="#4472c4"/>
<circle cx="232.5" cy="327.6" r="2.8" fill="#4472c4"/>
<circle cx="267.7" cy="275.3" r="2.8" fill="#4472c4"/>
<circle cx="302.9" cy="353.8" r="2.8" fill="#4472c4"/>
<circle cx="338.1" cy="314.5" r="2.8" fill="#4472c4"/>
<circle cx="373.3" cy="301.5" r="2.8" fill="#4472c4"/>
<circle cx="408.5" cy="327.6" r="2.8" fill="#4472c4"/>
<polyline points="91.7,314.5 126.9,314.5 162.1,314.5 197.3,314.5 232.5,314.5 267.7,314.5 302.9,314.5 338.1,314.5 373.3,314.5 408.5,314.5" stroke="#ed7d31" stroke-width="2.6" fill="none" stroke-linejoin="round" stroke-linecap="round"/>
<circle cx="91.7" cy="314.5" r="2.8" fill="#ed7d31"/>
<circle cx="126.9" cy="314.5" r="2.8" fill="#ed7d31"/>
<circle cx="162.1" cy="314.5" r="2.8" fill="#ed7d31"/>
<circle cx="197.3" cy="314.5" r="2.8" fill="#ed7d31"/>
<circle cx="232.5" cy="314.5" r="2.8" fill="#ed7d31"/>
<circle cx="267.7" cy="314.5" r="2.8" fill="#ed7d31"/>
<circle cx="302.9" cy="314.5" r="2.8" fill="#ed7d31"/>
<circle cx="338.1" cy="314.5" r="2.8" fill="#ed7d31"/>
<circle cx="373.3" cy="314.5" r="2.8" fill="#ed7d31"/>
<circle cx="408.5" cy="314.5" r="2.8" fill="#ed7d31"/>
<polyline points="91.7,291.2 126.9,291.2 162.1,291.2 197.3,291.2 232.5,291.2 267.7,291.2 302.9,291.2 338.1,291.2 373.3,291.2 408.5,291.2" stroke="#ffc000" stroke-width="2.6" fill="none" stroke-linejoin="round" stroke-linecap="round"/>
<circle cx="91.7" cy="291.2" r="2.8" fill="#ffc000"/>
<circle cx="126.9" cy="291.2" r="2.8" fill="#ffc000"/>
<circle cx="162.1" cy="291.2" r="2.8" fill="#ffc000"/>
<circle cx="197.3" cy="291.2" r="2.8" fill="#ffc000"/>
<circle cx="232.5" cy="291.2" r="2.8" fill="#ffc000"/>
<circle cx="267.7" cy="291.2" r="2.8" fill="#ffc000"/>
<circle cx="302.9" cy="291.2" r="2.8" fill="#ffc000"/>
<circle cx="338.1" cy="291.2" r="2.8" fill="#ffc000"/>
<circle cx="373.3" cy="291.2" r="2.8" fill="#ffc000"/>
<circle cx="408.5" cy="291.2" r="2.8" fill="#ffc000"/>
<polyline points="91.7,337.9 126.9,337.9 162.1,337.9 197.3,337.9 232.5,337.9 267.7,337.9 302.9,337.9 338.1,337.9 373.3,337.9 408.5,337.9" stroke="#5b9bd5" stroke-width="2.6" fill="none" stroke-linejoin="round" stroke-linecap="round"/>
<circle cx="91.7" cy="337.9" r="2.8" fill="#5b9bd5"/>
<circle cx="126.9" cy="337.9" r="2.8" fill="#5b9bd5"/>
<circle cx="162.1" cy="337.9" r="2.8" fill="#5b9bd5"/>
<circle cx="197.3" cy="337.9" r="2.8" fill="#5b9bd5"/>
<circle cx="232.5" cy="337.9" r="2.8" fill="#5b9bd5"/>
<circle cx="267.7" cy="337.9" r="2.8" fill="#5b9bd5"/>
<circle cx="302.9" cy="337.9" r="2.8" fill="#5b9bd5"/>
<circle cx="338.1" cy="337.9" r="2.8" fill="#5b9bd5"/>
<circle cx="373.3" cy="337.9" r="2.8" fill="#5b9bd5"/>
<circle cx="408.5" cy="337.9" r="2.8" fill="#5b9bd5"/>
<polyline points="91.7,361.3 126.9,361.3 162.1,361.3 197.3,361.3 232.5,361.3 267.7,361.3 302.9,361.3 338.1,361.3 373.3,361.3 408.5,361.3" stroke="#70ad47" stroke-width="2.6" fill="none" stroke-linejoin="round" stroke-linecap="round"/>
<circle cx="91.7" cy="361.3" r="2.8" fill="#70ad47"/>
<circle cx="126.9" cy="361.3" r="2.8" fill="#70ad47"/>
<circle cx="162.1" cy="361.3" r="2.8" fill="#70ad47"/>
<circle cx="197.3" cy="361.3" r="2.8" fill="#70ad47"/>
<circle cx="232.5" cy="361.3" r="2.8" fill="#70ad47"/>
<circle cx="267.7" cy="361.3" r="2.8" fill="#70ad47"/>
<circle cx="302.9" cy="361.3" r="2.8" fill="#70ad47"/>
<circle cx="338.1" cy="361.3" r="2.8" fill="#70ad47"/>
<circle cx="373.3" cy="361.3" r="2.8" fill="#70ad47"/>
<circle cx="408.5" cy="361.3" r="2.8" fill="#70ad47"/>
<polyline points="91.7,267.8 126.9,267.8 162.1,267.8 197.3,267.8 232.5,267.8 267.7,267.8 302.9,267.8 338.1,267.8 373.3,267.8 408.5,267.8" stroke="#264478" stroke-width="2.6" fill="none" stroke-linejoin="round" stroke-linecap="round"/>
<circle cx="91.7" cy="267.8" r="2.8" fill="#264478"/>
<circle cx="126.9" cy="267.8" r="2.8" fill="#264478"/>
<circle cx="162.1" cy="267.8" r="2.8" fill="#264478"/>
<circle cx="197.3" cy="267.8" r="2.8" fill="#264478"/>
<circle cx="232.5" cy="267.8" r="2.8" fill="#264478"/>
<circle cx="267.7" cy="267.8" r="2.8" fill="#264478"/>
<circle cx="302.9" cy="267.8" r="2.8" fill="#264478"/>
<circle cx="338.1" cy="267.8" r="2.8" fill="#264478"/>
<circle cx="373.3" cy="267.8" r="2.8" fill="#264478"/>
<circle cx="408.5" cy="267.8" r="2.8" fill="#264478"/>
<path d="M97.2,414.7 h22.5" stroke="#4472c4" stroke-width="2.6"/>
<circle cx="108.45" cy="414.7" r="2.8" fill="#4472c4"/>
<path d="M155,414.7 h22.5" stroke="#ed7d31" stroke-width="2.6"/>
<circle cx="166.25" cy="414.7" r="2.8" fill="#ed7d31"/>
<path d="M213.8,414.7 h22.5" stroke="#a5a5a5" stroke-width="2.6"/>
<circle cx="225.05" cy="414.7" r="2.8" fill="#a5a5a5"/>
<path d="M272,414.7 h22.5" stroke="#ffc000" stroke-width="2.6"/>
<circle cx="283.25" cy="414.7" r="2.8" fill="#ffc000"/>
<path d="M330,414.7 h22.5" stroke="#5b9bd5" stroke-width="2.6"/>
<circle cx="341.25" cy="414.7" r="2.8" fill="#5b9bd5"/>
<path d="M97.2,433 h22.5" stroke="#70ad47" stroke-width="2.6"/>
<circle cx="108.45" cy="433" r="2.8" fill="#70ad47"/>
<path d="M155,433 h22.5" stroke="#264478" stroke-width="2.6"/>
<circle cx="166.25" cy="433" r="2.8" fill="#264478"/>
<path d="M213.8,433 h22.5" stroke="#9e480e" stroke-width="2.6"/>
<circle cx="225.05" cy="433" r="2.8" fill="#9e480e"/>
<path d="M272,433 h22.5" stroke="#636363" stroke-width="2.6"/>
<circle cx="283.25" cy="433" r="2.8" fill="#636363"/>
</svg>
<div class="t" style="left:121.5px;top:409.5px;font-size:10.5px;color:#595959;font-weight:400;transform:scaleX(0.920);transform-origin:0 0;">Giá trị</div>
<div class="t" style="left:179.3px;top:409.5px;font-size:10.5px;color:#595959;font-weight:400;transform:scaleX(0.920);transform-origin:0 0;">Mean</div>
<div class="t" style="left:238.1px;top:409.5px;font-size:10.5px;color:#595959;font-weight:400;transform:scaleX(0.920);transform-origin:0 0;">SD</div>
<div class="t" style="left:296.3px;top:409.5px;font-size:10.5px;color:#595959;font-weight:400;transform:scaleX(0.920);transform-origin:0 0;">(+1)SD</div>
<div class="t" style="left:354.3px;top:409.5px;font-size:10.5px;color:#595959;font-weight:400;transform:scaleX(0.920);transform-origin:0 0;">(-1)SD</div>
<div class="t" style="left:121.5px;top:427.8px;font-size:10.5px;color:#595959;font-weight:400;transform:scaleX(0.920);transform-origin:0 0;">(-2)SD</div>
<div class="t" style="left:179.3px;top:427.8px;font-size:10.5px;color:#595959;font-weight:400;transform:scaleX(0.920);transform-origin:0 0;">(+2)SD</div>
<div class="t" style="left:238.1px;top:427.8px;font-size:10.5px;color:#595959;font-weight:400;transform:scaleX(0.920);transform-origin:0 0;">(-3)SD</div>
<div class="t" style="left:296.3px;top:427.8px;font-size:10.5px;color:#595959;font-weight:400;transform:scaleX(0.920);transform-origin:0 0;">(+3)SD</div>
<div class="b" style="left:527px;top:391px;width:42px;height:15px;background:#606060;opacity:0.4;filter:blur(0.7px)"></div>
<div class="b" style="left:523.7px;top:388px;width:43.5px;height:16px;background:#fff;border:1px solid #e6e6e6"></div>
<div class="t" style="left:527.7px;top:391.0px;font-size:10.6px;color:#3a3a3a;font-weight:400;transform:scaleX(0.900);transform-origin:0 0;">Vùng vẽ</div>
<svg style="left:0;top:0" width="1200" height="675">
<path d="M397.8,466.9 H403.4 V515.8 H395.8 V478.5 H389.3 V473.2 H391.8 Z" fill="#ff0000"/>
<path d="M411.3,518.5 Q412.5,515.5 415.5,517.5 Q438,549 466.5,564.5 L473.8,545 Q480,561 484,581 Q470,585.5 457,584.7 Q449,583.5 443,581.2 Q449,577 457.5,574.5 Q430,556 411.3,520.5Z" fill="#c3272b"/>
</svg>
<svg style="left:0;top:0" width="1200" height="135">
<!-- conditional formatting -->
<g>
<rect x="601.5" y="62.5" width="22" height="19" fill="#fff" stroke="#9a9a9a"/>
<path d="M602,67.5 h21 M602,72 h21 M602,76.5 h21 M607.5,63 v18 M612.5,63 v18 M618,63 v18" stroke="#b8b8b8" stroke-width="1"/>
<rect x="608" y="63" width="4" height="4.5" fill="#e8572a"/>
<rect x="608" y="67.5" width="7" height="4.5" fill="#3f7cc4"/>
<rect x="608" y="72" width="5" height="4.5" fill="#e8572a"/>
<rect x="608" y="76.5" width="3" height="4.5" fill="#3f7cc4"/>
<rect x="614.5" y="75.5" width="11.5" height="9" fill="#fff" stroke="#7a7a7a"/>
<text x="617" y="83.5" font-family="Liberation Sans" font-size="9" fill="#444">≠</text>
</g>
<!-- format as table -->
<g>
<rect x="661.5" y="61.5" width="21" height="19" fill="#fff" stroke="#9a9a9a"/>
<rect x="666" y="66" width="16" height="14.5" fill="#b9d3ee"/>
<path d="M662,66 h20 M662,70.5 h20 M662,75 h20 M666.5,62 v18 M671.5,62 v18 M676.5,62 v18" stroke="#c4c4c4" stroke-width="1"/>
<path d="M673,82 L678,76 L681,78 Q679,84 673,84Z" fill="#3f7cc4"/>
<path d="M679,76 L686,68 L688,70 L682,78Z" fill="#555"/>
</g>
<!-- cell styles -->
<g>
<rect x="705.5" y="59.5" width="23" height="21" fill="#fff" stroke="#9a9a9a"/>
<rect x="710" y="64" width="13" height="12" fill="#b9d3ee"/>
<path d="M706,64 h22 M706,76 h22 M710,60 v20 M723,60 v20" stroke="#b0b0b0" stroke-width="1"/>
<path d="M714,83 L720,77 L723,79 Q721,85 714,85Z" fill="#3f7cc4"/>
<path d="M721,77 L729,69 L731,71 L724,79Z" fill="#555"/>
</g>
<!-- insert -->
<g stroke="#888" stroke-width="1" fill="#fff">
<rect x="754.5" y="60.5" width="11" height="4"/><path d="M760,60.5 v4"/>
<rect x="754.5" y="75.5" width="11" height="8"/><path d="M760,75.5 v8 M754.5,79.5 h11"/>
<rect x="764.5" y="68.5" width="13" height="4" fill="#b9d3ee"/><path d="M769,68.5 v4 M773,68.5 v4"/>
</g>
<path d="M753,70.5 h10 M757,67 l-3.5,3.5 l3.5,3.5" stroke="#3f7cc4" stroke-width="1.6" fill="none"/>
<!-- delete -->
<g stroke="#888" stroke-width="1" fill="#fff">
<rect x="789.5" y="60.5" width="12" height="4"/><path d="M795.5,60.5 v4"/>
<rect x="789.5" y="74.5" width="12" height="8"/><path d="M795.5,74.5 v8 M789.5,78.5 h12"/>
<rect x="793.5" y="67.5" width="8" height="4" fill="#b9d3ee"/>
</g>
<path d="M801,64.5 l10,10 M811,64.5 l-10,10" stroke="#e44a2a" stroke-width="1.5"/>
<!-- format -->
<g>
<path d="M823.5,60 v4 M846.5,60 v4 M825,62 h20 M827,60 l-2,2 l2,2 M843,60 l2,2 l-2,2" stroke="#3f7cc4" stroke-width="1" fill="none"/>
<rect x="823.5" y="65.5" width="23" height="16" fill="#fff" stroke="#999"/>
<path d="M824,70 h22 M824,76 h22 M829.5,66 v15 M840.5,66 v15" stroke="#c4c4c4"/>
<rect x="830" y="69" width="10" height="9" fill="#3f7cc4"/>
<path d="M825,82 q4,3 8,0 q4,3 8,0" stroke="#999" fill="none"/>
</g>
<!-- autosum, fill, clear -->
<path d="M880,59.5 H870.5 L875.5,64.8 L870.5,70 H880.5" stroke="#333" stroke-width="1.5" fill="none"/>
<rect x="869.5" y="78.5" width="10" height="10.5" fill="#fff" stroke="#777"/>
<path d="M870,79 h9" stroke="#555" stroke-width="1.5"/>
<path d="M874.5,81 v6 M872,84.5 l2.5,2.5 l2.5,-2.5" stroke="#3f7cc4" stroke-width="1.3" fill="none"/>
<path d="M870,104.5 L876,98 L880,101.5 L874,108Z" fill="#e87b8c"/>
<path d="M871,104 L874,107" stroke="#fff" stroke-width="0.8"/>
<g stroke="#444" stroke-width="1.2" fill="none">
<path d="M892,64.5 l2.5,2.5 l2.5,-2.5 M886,83.5 l2.5,2.5 l2.5,-2.5 M886,102.5 l2.5,2.5 l2.5,-2.5"/>
</g>
<!-- sort filter -->
<text x="911.5" y="70.5" font-family="Liberation Sans" font-size="10.5" fill="#3f7cc4">A</text>
<text x="912" y="81.5" font-family="Liberation Sans" font-size="10.5" fill="#9457c4">Z</text>
<path d="M923,65.5 H935 L930.5,70.5 V76 L927.5,76 V70.5Z" fill="#6d6d6d"/>
<!-- find -->
<circle cx="971.5" cy="68.5" r="7.3" stroke="#3f7cc4" stroke-width="1.8" fill="none"/>
<path d="M966.5,73.5 L958.5,81.5" stroke="#3f7cc4" stroke-width="2.6" stroke-linecap="round"/>
<!-- addins -->
<circle cx="1024.5" cy="70.5" r="4.5" fill="#ff8f0a"/>
<!-- mycel -->
<path d="M1076,62.5 L1083,66 V74.5 L1076,78.5 L1071,75.5 V67Z" fill="#1a6fd6"/>
<path d="M1067,72 L1071.5,69.5 L1076,72 V77 L1071.5,79.5 L1067,77Z" fill="#1a6fd6" stroke="#fff" stroke-width="0.9"/>
<!-- chevrons in big buttons -->
<g stroke="#444" stroke-width="1.2" fill="none">
<path d="M630.8,104.8 l2.2,2.2 l2.2,-2.2 M692.3,104.8 l2.2,2.2 l2.2,-2.2 M719.3,104.8 l2.2,2.2 l2.2,-2.2 M762.8,105.3 l2.2,2.2 l2.2,-2.2 M804.3,104.8 l2.2,2.2 l2.2,-2.2 M844.8,104.8 l2.2,2.2 l2.2,-2.2 M934.8,104.8 l2.2,2.2 l2.2,-2.2 M976.8,104.8 l2.2,2.2 l2.2,-2.2"/>
</g>
</svg>
</body></html>
